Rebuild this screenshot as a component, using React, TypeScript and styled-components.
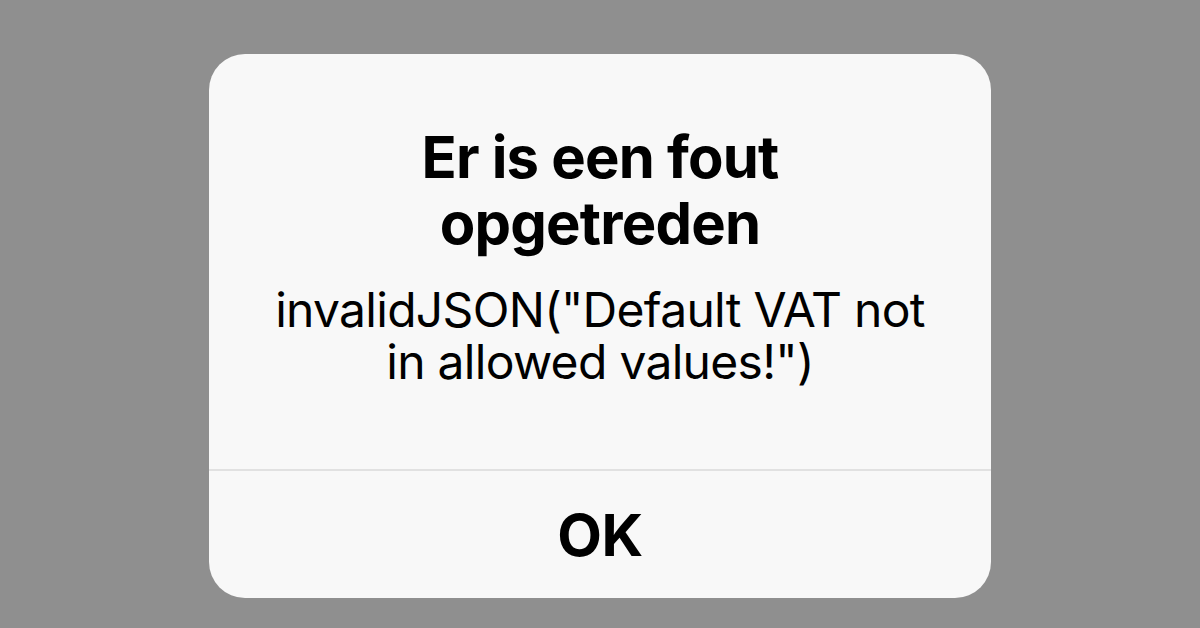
import React from "react";
import styled, { createGlobalStyle } from "styled-components";

const Global = createGlobalStyle`
  html, body { margin: 0; padding: 0; background: #8f8f8f; }
  body { font-family: Inter, "Noto Sans", "Liberation Sans", sans-serif; }
`;

const Page = styled.div`
  width: 1200px;
  height: 628px;
  display: flex;
  justify-content: center;
  align-items: flex-start;
  padding-top: 54px;
  box-sizing: border-box;
  background: #8f8f8f;
  overflow: hidden;
`;

const Dialog = styled.div`
  width: 782px;
  height: 544px;
  background: #f8f8f8;
  border-radius: 36px;
  display: flex;
  flex-direction: column;
  overflow: hidden;
`;

const Body = styled.div`
  flex: 1;
  display: flex;
  flex-direction: column;
  align-items: center;
  padding: 70px 40px 0;
  text-align: center;
  color: #000;
`;

const Title = styled.h1`
  margin: 0;
  font-size: 58px;
  line-height: 66px;
  font-weight: 700;
  letter-spacing: -0.8px;
  max-width: 420px;
`;

const Message = styled.p`
  margin: 28px 0 0;
  font-size: 48px;
  line-height: 52px;
  font-weight: 400;
  letter-spacing: -0.7px;
  max-width: 680px;
`;

const Divider = styled.div`
  height: 2px;
  background: #e1e1e1;
`;

const Button = styled.button`
  height: 127px;
  border: none;
  background: transparent;
  font-family: inherit;
  font-size: 58px;
  font-weight: 700;
  letter-spacing: -0.5px;
  color: #000;
  display: flex;
  align-items: center;
  justify-content: center;
  padding: 0;
`;

export default function App() {
  return (
    <>
      <Global />
      <Page>
        <Dialog>
          <Body>
            <Title>Er is een fout opgetreden</Title>
            <Message>invalidJSON("Default VAT not in allowed values!")</Message>
          </Body>
          <Divider />
          <Button>OK</Button>
        </Dialog>
      </Page>
    </>
  );
}
